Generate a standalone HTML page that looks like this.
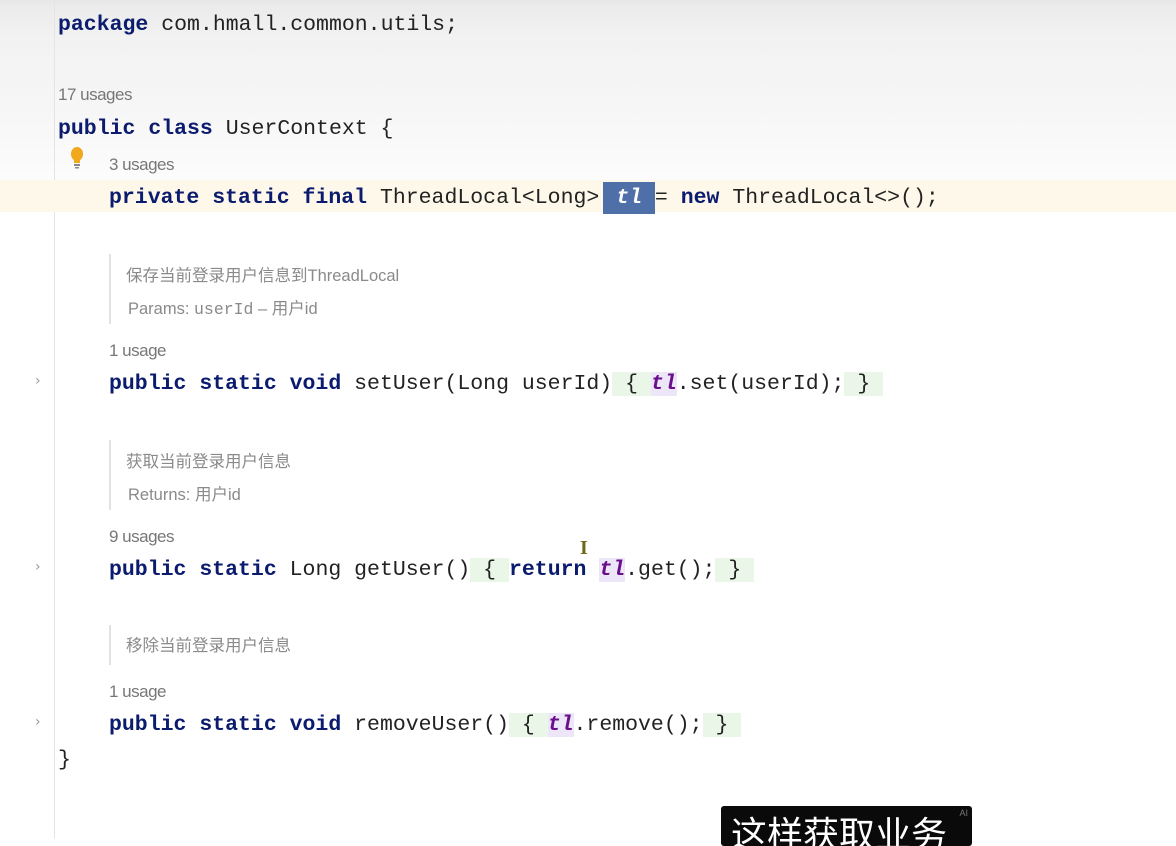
<!DOCTYPE html>
<html><head><meta charset="utf-8"><style>
body{margin:0;width:1176px;height:838px;overflow:hidden;position:relative;font-family:"Liberation Mono",monospace;background:#fff}
.bg{position:absolute;left:0;top:0;width:1176px;height:180px;background:linear-gradient(#e6e6e6 0,#ebebeb 5px,#f2f2f2 40px,#f7f7f7 120px,#fcfcfc 180px)}
.gut{position:absolute;left:54px;top:0;width:1px;height:838px;background:#e4e4e4}
.l{position:absolute;font-size:21.5px;color:#222;white-space:pre;line-height:30px;height:30px}
.k{color:#0b1b6e;font-weight:bold}
.u{position:absolute;font-family:"Liberation Sans",sans-serif;font-size:17px;color:#777;letter-spacing:-0.5px}
.c{position:absolute;font-family:"Liberation Sans","Noto Sans CJK SC",sans-serif;font-size:16.5px;color:#8a8a8a}
.bar{position:absolute;left:109px;width:2px;background:#e2e2e2}
.tl{color:#6a0f8a;font-weight:bold;font-style:italic;background:#ece6f8}
.g{background:#eaf6e8}
.arr{position:absolute;left:35px;color:#999;font-family:"DejaVu Sans",sans-serif;font-size:14px}
</style></head><body>
<div class="bg"></div>
<div class="gut"></div>
<div style="position:absolute;left:0;top:180px;width:1176px;height:32px;background:#fdf8ea"></div>
<div class="l" style="left:58px;top:10px"><span class="k">package</span> com.hmall.common.utils;</div>
<div class="u" style="left:58px;top:85px">17 usages</div>
<div class="l" style="left:58px;top:114px"><span class="k">public class</span> UserContext {</div>
<svg style="position:absolute;left:68px;top:146px" width="18" height="24"><ellipse cx="9" cy="8" rx="6" ry="7" fill="#f2a81d"/><rect x="6" y="14" width="6" height="3" fill="#f2a81d"/><rect x="6" y="18" width="6" height="2" fill="#888"/><rect x="7" y="21" width="4" height="1.5" fill="#888"/></svg>
<div class="u" style="left:109px;top:155px">3 usages</div>
<div class="l" style="left:109px;top:183px"><span class="k">private static final</span> ThreadLocal&lt;Long&gt;<span style="background:#4f6fa8;color:#fff;font-weight:bold;font-style:italic;display:inline-block;height:32px;margin-top:-3px;line-height:32px;margin-left:4px"> tl </span>= <span class="k">new</span> ThreadLocal&lt;&gt;();</div>
<div class="bar" style="top:254px;height:70px"></div>
<div class="c" style="left:126px;top:262px">保存当前登录用户信息到ThreadLocal</div>
<div class="c" style="left:128px;top:295px">Params: <span style="font-family:'Liberation Mono',monospace">userId</span> – 用户id</div>
<div class="u" style="left:109px;top:341px">1 usage</div>
<div class="arr" style="top:373px">›</div>
<div class="l" style="left:109px;top:369px"><span class="k">public static void</span> setUser(Long userId)<span class="g"> { </span><span class="tl">tl</span>.set(userId);<span class="g"> } </span></div>
<div class="bar" style="top:440px;height:70px"></div>
<div class="c" style="left:126px;top:448px">获取当前登录用户信息</div>
<div class="c" style="left:128px;top:481px">Returns: 用户id</div>
<div class="u" style="left:109px;top:527px">9 usages</div>
<div class="arr" style="top:559px">›</div>
<div class="l" style="left:109px;top:555px"><span class="k">public static</span> Long getUser()<span class="g"> { </span><span class="k">return</span> <span class="tl">tl</span>.get();<span class="g"> } </span></div>
<div style="position:absolute;left:580px;top:537px;color:#6b6b1a;font-family:'Liberation Serif',serif;font-weight:bold;font-size:20px">I</div>
<div class="bar" style="top:625px;height:40px"></div>
<div class="c" style="left:126px;top:632px">移除当前登录用户信息</div>
<div class="u" style="left:109px;top:682px">1 usage</div>
<div class="arr" style="top:714px">›</div>
<div class="l" style="left:109px;top:710px"><span class="k">public static void</span> removeUser()<span class="g"> { </span><span class="tl">tl</span>.remove();<span class="g"> } </span></div>
<div class="l" style="left:58px;top:745px">}</div>
<div style="position:absolute;left:721px;top:806px;width:251px;height:40px;background:#0a0a0a;border-radius:3px;overflow:hidden"><div style="position:absolute;left:10px;top:6px;color:#fff;font-family:'Noto Sans CJK SC',sans-serif;font-size:36px;line-height:40px;white-space:nowrap">这样获取业务</div><div style="position:absolute;right:4px;top:2px;color:#777;font-size:9px;font-family:'Liberation Sans',sans-serif">AI</div></div>
</body></html>
